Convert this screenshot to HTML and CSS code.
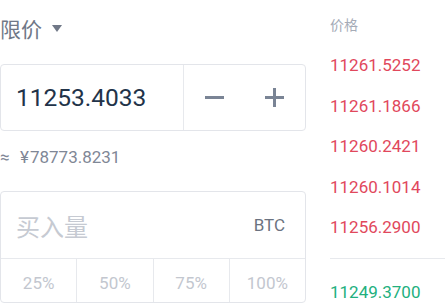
FILE: index.html
```html
<!DOCTYPE html>
<html lang="zh">
<head>
<meta charset="utf-8">
<link rel="stylesheet" href="styles.css">
</head>
<body>
<div class="page">
  <div class="form">
    <div class="type">
      <span class="type-label">限价</span>
      <span class="caret"></span>
    </div>
    <div class="price-box">
      <div class="price-value">11253.4033</div>
      <div class="stepper">
        <div class="step"><span class="minus"></span></div>
        <div class="step"><span class="plus"></span></div>
      </div>
    </div>
    <div class="approx"><span class="approx-sign">≈</span><span class="yen">¥</span>78773.8231</div>
    <div class="amount-box">
      <div class="amount-row">
        <span class="amount-ph">买入量</span>
        <span class="unit">BTC</span>
      </div>
      <div class="pcts">
        <div class="pct">25%</div>
        <div class="pct">50%</div>
        <div class="pct">75%</div>
        <div class="pct">100%</div>
      </div>
    </div>
  </div>
  <div class="book">
    <div class="book-head">价格</div>
    <div class="row ask">11261.5252</div>
    <div class="row ask">11261.1866</div>
    <div class="row ask">11260.2421</div>
    <div class="row ask">11260.1014</div>
    <div class="row ask">11256.2900</div>
    <div class="sep"></div>
    <div class="row bid">11249.3700</div>
  </div>
</div>
</body>
</html>
```
FILE: styles.css
```css
html, body {
  margin: 0;
  padding: 0;
  background: #ffffff;
}
body {
  font-family: Roboto, "Noto Sans CJK SC", sans-serif;
  width: 445px;
  height: 306px;
  overflow: hidden;
}
.page {
  display: flex;
  align-items: flex-start;
}
.form {
  width: 306px;
  flex: none;
  display: flex;
  flex-direction: column;
}
.type {
  height: 64px;
  display: flex;
  align-items: flex-start;
  padding-top: 15px;
  box-sizing: border-box;
  gap: 10px;
}
.type-label {
  font-family: "Noto Sans CJK SC", sans-serif;
  font-size: 21px;
  line-height: 26px;
  color: #707887;
}
.caret {
  width: 0;
  height: 0;
  border-left: 5px solid transparent;
  border-right: 5px solid transparent;
  border-top: 7px solid #707887;
  margin-top: 10px;
}
.price-box {
  height: 67px;
  box-sizing: border-box;
  border: 1px solid #e3e5ea;
  border-radius: 4px;
  display: flex;
}
.price-value {
  flex: 1;
  display: flex;
  align-items: center;
  padding-left: 15px;
  font-size: 24.5px;
  color: #223349;
}
.stepper {
  width: 121px;
  display: flex;
  border-left: 1px solid #e7e9ed;
}
.step {
  flex: 1;
  display: flex;
  align-items: center;
  justify-content: center;
}
.minus, .plus {
  position: relative;
  width: 19px;
  height: 19px;
}
.minus::before, .plus::before, .plus::after {
  content: "";
  position: absolute;
  background: #7a8495;
}
.minus::before, .plus::before {
  left: 0;
  right: 0;
  top: 8px;
  height: 3px;
}
.plus::after {
  top: 0;
  bottom: 0;
  left: 8px;
  width: 3px;
}
.approx {
  height: 60px;
  box-sizing: border-box;
  padding-top: 16px;
  font-size: 17px;
  line-height: 20px;
  color: #7f8796;
  display: flex;
  align-items: baseline;
}
.approx-sign {
  width: 20px;
}
.yen {
  margin-right: 1px;
}
.amount-box {
  height: 112px;
  box-sizing: border-box;
  border: 1px solid #e3e5ea;
  border-radius: 4px;
  display: flex;
  flex-direction: column;
}
.amount-row {
  height: 66px;
  display: flex;
  align-items: center;
  justify-content: space-between;
  padding: 0 20px 0 15px;
  border-bottom: 1px solid #e7e9ed;
}
.amount-ph {
  font-family: "Noto Sans CJK SC", sans-serif;
  font-size: 24px;
  color: #c6cad2;
}
.unit {
  font-size: 17px;
  color: #6b7280;
}
.pcts {
  flex: 1;
  display: flex;
}
.pct {
  flex: 1;
  display: flex;
  align-items: center;
  justify-content: center;
  padding-top: 4px;
  font-size: 17px;
  color: #c3c7cf;
  border-left: 1px solid #e7e9ed;
}
.pct:first-child {
  border-left: none;
}
.book {
  flex: 1;
  padding-left: 24px;
  display: flex;
  flex-direction: column;
}
.book-head {
  margin-top: 14px;
  height: 31px;
  line-height: 20px;
  font-family: "Noto Sans CJK SC", sans-serif;
  font-size: 14px;
  color: #a5abb7;
}
.row {
  height: 40.5px;
  display: flex;
  align-items: center;
  font-size: 17px;
}
.ask {
  color: #e1485c;
}
.bid {
  color: #22b07e;
  margin-top: 13px;
}
.sep {
  margin-top: 10.5px;
  height: 1px;
  background: #e7e9ed;
}
```
